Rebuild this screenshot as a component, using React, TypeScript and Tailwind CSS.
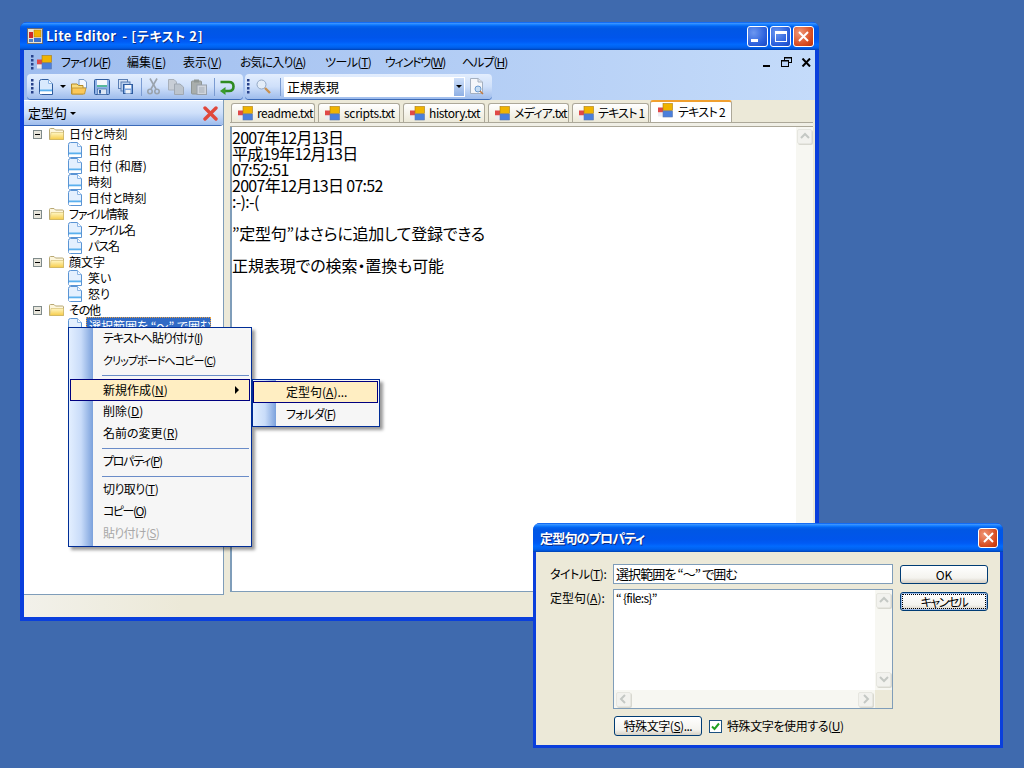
import React from 'react'

const JP = 'font-["Noto_Sans_CJK_JP","Liberation_Sans",sans-serif] [font-feature-settings:"palt"]'

const AppIcon = ({ className = '' }: { className?: string }) => (
  <svg width="15" height="15" viewBox="0 0 15 15" className={`shrink-0 ${className}`}>
    <rect x="0" y="4.5" width="5" height="5" fill="#e04848" />
    <rect x="0" y="9.5" width="5" height="4" fill="#ecebf2" />
    <rect x="5" y="0.5" width="9.5" height="7" fill="#f0b400" stroke="#a87a10" strokeWidth="0.6" />
    <rect x="5" y="8" width="9.5" height="6" fill="#4a7fdc" stroke="#5a78b0" strokeWidth="0.6" />
  </svg>
)

const TitleIcon = () => (
  <svg width="16" height="16" viewBox="0 0 16 16" className="shrink-0">
    <rect x="0.5" y="0.5" width="15" height="15" fill="#ece4d0" stroke="#6a6a70" />
    <rect x="2" y="4" width="4" height="6" fill="#d02828" />
    <rect x="7" y="2" width="7" height="7" fill="#f0b000" stroke="#a87a10" strokeWidth="0.5" />
    <rect x="7" y="10" width="7" height="4" fill="#3a70d0" />
    <rect x="2" y="11" width="4" height="3" fill="#5080c8" />
  </svg>
)

const DocIcon = ({ stroke = '#5a94d4', fill = '#e4f0fe' }: { stroke?: string; fill?: string }) => (
  <svg width="15" height="16" viewBox="0 0 15 16" className="shrink-0">
    <path d="M2.5 0.5H9.5L13.5 4.5V15.5H2.5Q0.5 15.5 0.5 13.5V2.5Q0.5 0.5 2.5 0.5Z" fill={fill} stroke={stroke} />
    <path d="M9.5 0.5V4.5H13.5" fill="#f6faff" stroke="#8ab4e4" />
    <rect x="1" y="10.5" width="12" height="2" fill="#5ab0ee" />
    <rect x="1" y="12.5" width="12" height="2.5" fill="#ffffff" />
  </svg>
)

const FolderIcon = () => (
  <svg width="15" height="14" viewBox="0 0 15 14">
    <defs>
      <linearGradient id="folderFront" x1="0" y1="0" x2="0" y2="1">
        <stop offset="0" stopColor="#fff6c4" />
        <stop offset="1" stopColor="#f6cc48" />
      </linearGradient>
    </defs>
    <path d="M0.5 2.5Q0.5 1.5 1.5 1.5H5L6.5 3H13.5Q14.5 3 14.5 4V12.5H0.5Z" fill="#fdf6dc" stroke="#b8a874" />
    <path d="M2 5.5H14.5V12.5H1Z" fill="url(#folderFront)" stroke="#d0b868" strokeWidth="0.6" />
  </svg>
)

const Minus = () => (
  <span className="flex h-[9px] w-[9px] shrink-0 items-center justify-center border border-[#7f8a8a] bg-[#e8e6dc]">
    <span className="h-[1px] w-[5px] bg-black" />
  </span>
)

const Grip = () => (
  <svg width="3" height="17" viewBox="0 0 3 17" className="shrink-0">
    {[1, 5, 9, 13].map((y) => (
      <rect key={y} x="0" y={y} width="2.5" height="2.5" fill="#27418a" />
    ))}
  </svg>
)

const ToolSep = () => <span className="mx-[3px] block h-[18px] w-[1px] shrink-0 bg-[#7a9bd2]" />

const OpenIcon = () => (
  <svg width="17" height="16" viewBox="0 0 17 16">
    <path d="M8 0.5H13L15.5 3V9H8Z" fill="#f4f8ff" stroke="#7a9cc8" />
    <path d="M0.5 5H6L7.5 6.5H12V15H0.5Z" fill="#f8dc80" stroke="#b48a28" />
    <path d="M1 9H15L13.5 15H1Z" fill="#fcc858" stroke="#c49a38" />
  </svg>
)

const SaveIcon = () => (
  <svg width="16" height="16" viewBox="0 0 16 16">
    <rect x="0.5" y="0.5" width="15" height="15" rx="1" fill="#8fb2e6" stroke="#2f5c9e" />
    <rect x="3" y="1" width="10" height="5" fill="#f6f8fc" />
    <rect x="3" y="6" width="10" height="2" fill="#58b89c" />
    <rect x="3.5" y="10" width="9" height="5.5" fill="#dbe6f4" stroke="#2f5c9e" strokeWidth="0.6" />
    <rect x="5" y="11" width="2" height="3.5" fill="#2f5c9e" />
  </svg>
)

const SaveAllIcon = () => (
  <svg width="15" height="15" viewBox="0 0 15 15">
    <rect x="0.5" y="0.5" width="9" height="9" fill="#d6e3f5" stroke="#5a7eb4" />
    <rect x="3" y="3" width="9" height="9" fill="#bcd1ee" stroke="#5a7eb4" />
    <rect x="5.5" y="5.5" width="9" height="9" fill="#7ea6de" stroke="#2f5c9e" />
    <rect x="7" y="6" width="6" height="3.5" fill="#f6f8fc" />
    <rect x="7.5" y="11" width="5" height="3.5" fill="#eef2f8" />
  </svg>
)

const CutIcon = () => (
  <svg width="13" height="17" viewBox="0 0 13 17" fill="none" stroke="#9aa3ad" strokeWidth="1.6">
    <path d="M10 0.5L4 11" />
    <path d="M3 0.5L9 11" />
    <circle cx="3" cy="13.5" r="2.2" />
    <circle cx="10" cy="13.5" r="2.2" />
  </svg>
)

const CopyIcon = () => (
  <svg width="16" height="16" viewBox="0 0 16 16">
    <path d="M0.5 0.5H6L8.5 3V11H0.5Z" fill="#c8ced6" stroke="#a8b0ba" />
    <path d="M6.5 5H12L15.5 8V15.5H6.5Z" fill="#bcc4cd" stroke="#a0a8b2" />
  </svg>
)

const PasteIcon = () => (
  <svg width="16" height="16" viewBox="0 0 16 16">
    <rect x="0.5" y="2" width="10" height="13" rx="1" fill="#a9aeac" stroke="#8f9694" />
    <rect x="3" y="0.5" width="5" height="3" fill="#8f9694" />
    <rect x="6" y="6" width="9.5" height="9.5" fill="#d0d5dc" stroke="#98a0aa" />
    <path d="M8 9H13.5M8 11H13.5M8 13H13.5" stroke="#9aa2ac" strokeWidth="0.8" />
  </svg>
)

const UndoIcon = () => (
  <svg width="16" height="16" viewBox="0 0 16 16" fill="none">
    <path d="M1.5 3H10Q14.5 3 14.5 7.5Q14.5 12 10 12H6" stroke="#2e8b22" strokeWidth="2.6" />
    <path d="M6.5 8V16L1 12Z" fill="#3a9c2c" />
  </svg>
)

const SearchIcon = () => (
  <svg width="15" height="15" viewBox="0 0 15 15" fill="none">
    <circle cx="5.5" cy="5.5" r="4.5" fill="#e4edf8" stroke="#93a8c4" />
    <path d="M9 9L14 14" stroke="#c89050" strokeWidth="2.4" />
  </svg>
)

const FindDocIcon = () => (
  <svg width="16" height="17" viewBox="0 0 16 17" fill="none">
    <path d="M1.5 0.5H9L13.5 4V15.5H1.5Z" fill="#f4f6fa" stroke="#a4b0c0" />
    <path d="M9 0.5V4H13.5" fill="#dfe5ee" stroke="#a4b0c0" />
    <circle cx="9" cy="11" r="3" fill="#c4dcf4" stroke="#6a9ad0" />
    <path d="M11 13L14 16" stroke="#c07a40" strokeWidth="1.5" />
  </svg>
)

const RedX = () => (
  <svg width="15" height="15" viewBox="0 0 15 15" fill="none">
    <path d="M2 2L13 13M13 2L2 13" stroke="#e0483c" strokeWidth="3.4" strokeLinecap="round" />
  </svg>
)

const CloseBtn = ({ size }: { size: string }) => (
  <span className={`flex items-center justify-center rounded-[3px] border border-white bg-[radial-gradient(circle_at_30%_30%,#f09878,#d84c20_65%,#b83008)] ${size}`}>
    <svg width="11" height="11" viewBox="0 0 11 11" fill="none">
      <path d="M1 1L10 10M10 1L1 10" stroke="white" strokeWidth="2" />
    </svg>
  </span>
)

const BlueBtn = ({ children }: { children: React.ReactNode }) => (
  <span className="flex h-[21px] w-[21px] items-center justify-center rounded-[3px] border border-white bg-[radial-gradient(circle_at_30%_30%,#6c97f0,#2a5fdc_65%,#1c48c0)]">
    {children}
  </span>
)

const Arrow = ({ dir }: { dir: 'up' | 'down' | 'left' | 'right' }) => {
  const d = {
    up: 'M1 6L5 2L9 6',
    down: 'M1 2L5 6L9 2',
    left: 'M6 1L2 5L6 9',
    right: 'M3 1L7 5L3 9',
  }[dir]
  return (
    <svg width="10" height="10" viewBox="0 0 10 10" fill="none">
      <path d={d} stroke="#c4c8c4" strokeWidth="2" />
    </svg>
  )
}

const ScrollBtn = ({ dir, className = '' }: { dir: 'up' | 'down' | 'left' | 'right'; className?: string }) => (
  <span className={`flex shrink-0 items-center justify-center rounded-[2px] border border-[#e6e6e0] bg-[#f2f2ee] shadow-[1px_1px_0_#d8d8d0] ${className}`}>
    <Arrow dir={dir} />
  </span>
)

const menuItems: [string, string, number, string][] = [
  ['ファイル', 'F', 66, 'tracking-[-1px]'],
  ['編集', 'E', 56, 'tracking-[0px]'],
  ['表示', 'V', 57, 'tracking-[0px]'],
  ['お気に入り', 'A', 85, 'tracking-[-0.9px]'],
  ['ツール', 'T', 60, 'tracking-[-0.5px]'],
  ['ウィンドウ', 'W', 77, 'tracking-[-1.2px]'],
  ['ヘルプ', 'H', 60, 'tracking-[-1px]'],
]

const Key = ({ label, k, rest = '' }: { label: string; k: string; rest?: string }) => (
  <>
    {label}(<u>{k}</u>){rest}
  </>
)

const tabs: [string, string, string][] = [
  ['readme.txt', 'w-[84px]', 'tracking-[-0.4px]'],
  ['scripts.txt', 'w-[82px]', 'tracking-[-0.3px]'],
  ['history.txt', 'w-[82px]', 'tracking-[-0.4px]'],
  ['メディア.txt', 'w-[81px]', 'tracking-[-0.8px]'],
  ['テキスト 1', 'w-[77px]', 'tracking-[-0.8px]'],
]

const tree: { name: string; cls?: string; items: [string, string?][] }[] = [
  { name: '日付と時刻', items: [['日付'], ['日付 (和暦)'], ['時刻'], ['日付と時刻']] },
  { name: 'ファイル情報', cls: 'tracking-[-1.2px]', items: [['ファイル名', 'tracking-[-1.4px]'], ['パス名', 'tracking-[-1px]']] },
  { name: '顔文字', items: [['笑い'], ['怒り']] },
  { name: 'その他', cls: 'tracking-[-1.2px]', items: [] },
]

const toolbarBg = 'bg-[linear-gradient(to_bottom,#e3eefe,#cfe0fa_50%,#9ebcec)]'

const MenuItem = ({ label, k, rest, disabled, cls = '' }: { label: string; k: string; rest?: string; disabled?: boolean; cls?: string }) => (
  <div className={`flex h-[22px] items-start pl-[34px] leading-[20px] ${cls} ${disabled ? 'text-[#a8a8a8]' : 'text-black'}`}>
    <span><Key label={label} k={k} rest={rest} /></span>
  </div>
)

const MenuSep = ({ h }: { h: string }) => (
  <div className={`flex items-center pl-[33px] pr-[2px] ${h}`}>
    <span className="h-[1px] w-full bg-[#6a8cc8]" />
  </div>
)

const XpButton = ({ children, focus, className = '' }: { children: React.ReactNode; focus?: boolean; className?: string }) => (
  <div className={`flex items-center justify-center rounded-[3px] border border-[#003c74] bg-[linear-gradient(to_bottom,#ffffff,#f4f3ee_70%,#d6d0c5)] ${className}`}>
    {focus ? (
      <span className="flex h-[15px] w-[84px] items-center justify-center border border-dotted border-black">{children}</span>
    ) : (
      children
    )}
  </div>
)

export default function App() {
  return (
    <div className={`relative h-[768px] w-[1024px] overflow-hidden bg-[#3f6aae] text-[12px] text-black ${JP}`}>
      {/* main window */}
      <div className="absolute left-[20px] top-[22px] flex h-[599px] w-[799px] flex-col overflow-hidden rounded-t-[7px] bg-[#0a3fdc]">
        <div className="flex h-[28px] shrink-0 items-center bg-[linear-gradient(to_bottom,#0058ee_0%,#3a93ff_5%,#127dff_10%,#0262ee_16%,#0057e5_24%,#0055eb_56%,#005bf5_70%,#026afe_80%,#0062ef_90%,#0052d6_96%,#0040ab_100%)] pl-[7px] pr-[5px]">
          <TitleIcon />
          <span className="ml-[3px] flex whitespace-pre text-[13px] font-bold text-white [text-shadow:1px_1px_0_#0a2a80]">
            <span className="tracking-[0.35px]">Lite Editor</span>
            <span className="ml-[6px] tracking-[0.6px]">- [テキスト 2]</span>
          </span>
          <span className="ml-auto flex gap-[2px]">
            <BlueBtn><span className="mt-[8px] mr-[6px] h-[3px] w-[7px] bg-white" /></BlueBtn>
            <BlueBtn><span className="h-[11px] w-[12px] border border-t-[3px] border-white" /></BlueBtn>
            <CloseBtn size="h-[21px] w-[21px]" />
          </span>
        </div>

        <div className="mx-[4px] flex min-h-0 flex-1 flex-col bg-[#ece9d8]">
          <div className="bg-[linear-gradient(to_right,#9ebcee,#c4dbfa)]">
            {/* menu */}
            <div className="flex h-[24px] items-center pl-[7px]">
              <Grip />
              <span className="ml-[3px] w-[24px]"><AppIcon /></span>
              {menuItems.map(([label, k, w, cls]) => (
                <span key={k} className={`shrink-0 ${cls}`} style={{ width: w }}>
                  <Key label={label} k={k} />
                </span>
              ))}
              <span className="ml-auto flex items-center gap-[7px] pr-[3px]">
                <span className="mt-[7px] h-[2px] w-[7px] bg-black" />
                <svg width="12" height="10" viewBox="0 0 12 10" fill="none" stroke="black" className="ml-[4px]">
                  <rect x="3.5" y="0.5" width="7" height="5" />
                  <rect x="0.5" y="3.5" width="7" height="6" fill="#bcd4f8" />
                  <path d="M1 4H7M4 1H10" />
                </svg>
                <svg width="11" height="9" viewBox="0 0 11 9" fill="none" className="ml-[1px]">
                  <path d="M1.5 0.5L9 8.5M9 0.5L1.5 8.5" stroke="black" strokeWidth="2" />
                </svg>
              </span>
            </div>
            {/* toolbars */}
            <div className="flex h-[26px] items-start gap-[2px] pl-[3px]">
              <div className={`flex h-[25px] w-[216px] items-center rounded-[4px] pl-[4px] shadow-[0_1px_0_#3b6ab8] ${toolbarBg}`}>
                <Grip />
                <span className="ml-[5px]"><DocIcon stroke="#2f5c9e" fill="#d8e9fd" /></span>
                <span className="ml-[6px] h-0 w-0 border-x-[3px] border-t-[3px] border-x-transparent border-t-black" />
                <span className="ml-[5px]"><OpenIcon /></span>
                <span className="ml-[6px]"><SaveIcon /></span>
                <span className="ml-[8px]"><SaveAllIcon /></span>
                <span className="ml-[5px]"><ToolSep /></span>
                <span className="ml-[2px]"><CutIcon /></span>
                <span className="ml-[8px]"><CopyIcon /></span>
                <span className="ml-[7px]"><PasteIcon /></span>
                <span className="ml-[4px]"><ToolSep /></span>
                <span className="ml-[1px]"><UndoIcon /></span>
              </div>
              <div className={`flex h-[25px] w-[247px] items-center rounded-[4px] pl-[2px] shadow-[0_1px_0_#3b6ab8] ${toolbarBg}`}>
                <Grip />
                <span className="ml-[6px]"><SearchIcon /></span>
                <span className="ml-[6px]"><ToolSep /></span>
                <div className="flex h-[20px] w-[181px] items-center bg-white pl-[3px] text-[13px]">
                  <span>正規表現</span>
                  <span className="ml-auto flex h-[20px] w-[12px] items-center justify-center border border-white bg-[linear-gradient(to_bottom,#cfe0fa,#8fb0e4)]">
                    <span className="h-0 w-0 border-x-[3px] border-t-[3px] border-x-transparent border-t-black" />
                  </span>
                </div>
                <span className="ml-[4px]"><FindDocIcon /></span>
              </div>
            </div>
          </div>

          <div className="flex min-h-0 flex-1">
            {/* left panel */}
            <div className="flex w-[200px] shrink-0 flex-col border-r border-b border-[#7f9db9] bg-white">
              <div className={`mt-[1px] flex h-[24px] shrink-0 items-center rounded-br-[3px] pl-[4px] pr-[5px] shadow-[0_1px_0_#3b6ab8] ${toolbarBg}`}>
                <span className="text-[13px]">定型句</span>
                <span className="ml-[3px] h-0 w-0 border-x-[3px] border-t-[3px] border-x-transparent border-t-black" />
                <span className="ml-auto"><RedX /></span>
              </div>
              <div className="pt-[1px] leading-[16px]">
                {tree.map((group) => (
                  <div key={group.name}>
                    <div className="flex h-[16px] items-center pl-[9px]">
                      <Minus />
                      <span className="ml-[7px]"><FolderIcon /></span>
                      <span className={`ml-[5px] ${group.cls ?? ''}`}>{group.name}</span>
                    </div>
                    {group.items.map(([item, cls]) => (
                      <div key={item} className="flex h-[16px] items-center pl-[44px]">
                        <DocIcon />
                        <span className={`ml-[5px] ${cls ?? ''}`}>{item}</span>
                      </div>
                    ))}
                  </div>
                ))}
                <div className="flex h-[16px] items-center pl-[44px]">
                  <DocIcon />
                  <span className="ml-[3px] w-[125px] overflow-hidden whitespace-nowrap border border-dotted border-[#e8a040] bg-[#316ac5] pl-[2px] text-white">選択範囲を “～” で囲む</span>
                </div>
              </div>
            </div>

            {/* right side */}
            <div className="flex min-w-0 flex-1 flex-col">
              <div className="flex h-[22px] shrink-0 items-end gap-[3px] pl-[7px]">
                {tabs.map(([name, w, cls]) => (
                  <div key={name} className={`flex h-[19px] shrink-0 items-center rounded-t-[3px] border border-b-0 border-[#aca899] bg-[linear-gradient(to_bottom,#ffffff,#ece9d8)] pl-[6px] ${w}`}>
                    <AppIcon />
                    <span className={`ml-[4px] whitespace-nowrap ${cls}`}>{name}</span>
                  </div>
                ))}
                <div className="-ml-[2px] flex h-[22px] w-[82px] shrink-0 items-center rounded-t-[3px] border-x border-[#aca899] border-t-[2px] border-t-[#f0a030] bg-white pl-[7px]">
                  <AppIcon className="-mt-[3px]" />
                  <span className="ml-[5px] whitespace-nowrap tracking-[-0.7px]">テキスト 2</span>
                </div>
              </div>
              <div className="flex min-h-0 flex-1 flex-col pl-[6px] pr-[2px] pb-[3px]">
                <div className="h-[5px] shrink-0 border-y border-[#aca899] bg-[#f0efe6]" />
                <div className="flex min-h-0 flex-1 border-l-[2px] border-b border-[#7f9db9] bg-white">
                  <div className="flex-1 whitespace-nowrap pt-[2px] text-[16px] leading-[16px]">
                    <div className="whitespace-pre tracking-[-0.7px]">{'2007年12月13日\n平成19年12月13日\n07:52:51\n2007年12月13日 07:52\n:-):-('}</div>
                    <div className="mt-[16px] tracking-[-0.25px]">”定型句”はさらに追加して登録できる</div>
                    <div className="mt-[16px] tracking-[-0.1px]">正規表現での検索・置換も可能</div>
                  </div>
                  <div className="flex w-[17px] shrink-0 flex-col items-center bg-[#f7f7f2] pt-[2px]">
                    <ScrollBtn dir="up" className="h-[15px] w-[15px]" />
                  </div>
                </div>
              </div>
            </div>
          </div>
          {/* status bar */}
          <div className="h-[22px] shrink-0 bg-[linear-gradient(to_right,#f2f1ea,#ece9d8_20%)]" />
        </div>
        <div className="h-[4px] shrink-0" />
      </div>

      {/* context menu */}
      <div className="absolute left-[68px] top-[327px] h-[220px] w-[184px] border border-[#002d96] bg-[linear-gradient(to_right,#e3efff_0,#c9dcf9_12px,#7ba1dc_24px,#f6f6f6_24px)] shadow-[3px_3px_3px_rgba(0,0,0,0.4)]">
        <MenuItem label="テキストへ貼り付け" k="I" cls="tracking-[-1px]" />
        <MenuItem label="クリップボードへコピー" k="C" cls="text-[11px] tracking-[-0.9px]" />
        <MenuSep h="h-[7px]" />
        <div className="mx-[1px] flex h-[22px] items-center border border-[#000080] bg-[#ffeec2] pl-[32px] pr-[10px]">
          <span className="-mt-[1px]"><Key label="新規作成" k="N" /></span>
          <span className="ml-auto h-0 w-0 border-y-[4px] border-l-[4px] border-y-transparent border-l-black" />
        </div>
        <MenuItem label="削除" k="D" />
        <MenuItem label="名前の変更" k="R" />
        <MenuSep h="h-[6px]" />
        <MenuItem label="プロパティ" k="P" cls="tracking-[-1.3px]" />
        <MenuSep h="h-[6px]" />
        <MenuItem label="切り取り" k="T" cls="tracking-[-0.6px]" />
        <MenuItem label="コピー" k="O" cls="tracking-[-1.5px]" />
        <MenuItem label="貼り付け" k="S" cls="tracking-[-0.7px]" disabled />
      </div>

      {/* submenu */}
      <div className="absolute left-[252px] top-[379px] h-[48px] w-[128px] border border-[#002d96] bg-[linear-gradient(to_right,#e3efff_0,#c9dcf9_12px,#7ba1dc_23px,#f6f6f6_23px)] pt-[1px] shadow-[3px_3px_3px_rgba(0,0,0,0.4)]">
        <div className="mr-[1px] flex h-[22px] items-center border border-[#000080] bg-[#ffeec2] pl-[32px]">
          <span className="-mt-[1px]"><Key label="定型句" k="A" rest="..." /></span>
        </div>
        <div className="flex h-[22px] items-center pl-[33px]">
          <span className="-mt-[1px] tracking-[-1px]"><Key label="フォルダ" k="F" /></span>
        </div>
      </div>

      {/* property dialog */}
      <div className="absolute left-[533px] top-[523px] flex h-[225px] w-[470px] flex-col overflow-hidden rounded-t-[7px] bg-[#0a3fdc]">
        <div className="flex h-[29px] shrink-0 items-center bg-[linear-gradient(to_bottom,#0058ee_0%,#3a93ff_5%,#127dff_10%,#0262ee_16%,#0057e5_24%,#0055eb_56%,#005bf5_70%,#026afe_80%,#0062ef_90%,#0052d6_96%,#0040ab_100%)] pl-[7px] pr-[5px]">
          <span className="text-[13px] font-bold tracking-[-0.8px] text-white [text-shadow:1px_1px_0_#0a2a80]">定型句のプロパティ</span>
          <span className="ml-auto"><CloseBtn size="h-[20px] w-[20px]" /></span>
        </div>
        <div className="mx-[3px] mb-[3px] flex min-h-0 flex-1 bg-[#ece9d8] pl-[14px] pt-[12px]">
          <div className="flex w-[343px] shrink-0 flex-col">
            <div className="flex">
              <span className="w-[63px] shrink-0 leading-[19px] tracking-[-0.5px]"><Key label="タイトル" k="T" rest=":" /></span>
              <div className="flex h-[20px] w-[280px] items-center border border-[#7f9db9] bg-white pl-[2px] text-[13px] tracking-[-0.9px]">選択範囲を “～” で囲む</div>
            </div>
            <div className="mt-[5px] flex">
              <span className="w-[63px] shrink-0 leading-[17px]"><Key label="定型句" k="A" rest=":" /></span>
              <div className="flex h-[120px] w-[280px] flex-col border border-[#7f9db9] bg-white">
                <div className="flex min-h-0 flex-1">
                  <div className="flex-1 pl-[2px] leading-[16px] tracking-[-0.7px]">“ {'{file:s}'}”</div>
                  <div className="flex w-[17px] shrink-0 flex-col items-center justify-between bg-[#f7f7f2] py-[3px]">
                    <ScrollBtn dir="up" className="h-[15px] w-[15px]" />
                    <ScrollBtn dir="down" className="h-[15px] w-[15px]" />
                  </div>
                </div>
                <div className="flex h-[18px] shrink-0">
                  <div className="flex flex-1 items-center justify-between bg-[#f7f7f2] px-[2px]">
                    <ScrollBtn dir="left" className="h-[15px] w-[15px]" />
                    <ScrollBtn dir="right" className="h-[15px] w-[15px]" />
                  </div>
                  <div className="w-[17px] bg-[#ece9d8]" />
                </div>
              </div>
            </div>
            <div className="mt-[7px] flex items-center pl-[64px]">
              <XpButton className="h-[20px] w-[88px] tracking-[-0.5px]"><Key label="特殊文字" k="S" rest="..." /></XpButton>
              <span className="ml-[7px] flex h-[13px] w-[13px] items-center justify-center border border-[#1c5180] bg-white">
                <svg width="9" height="9" viewBox="0 0 9 9" fill="none">
                  <path d="M1 4.5L3.5 7L8 1.5" stroke="#21a121" strokeWidth="2" />
                </svg>
              </span>
              <span className="ml-[5px] tracking-[-0.4px]"><Key label="特殊文字を使用する" k="U" /></span>
            </div>
          </div>
          <div className="ml-[7px] mt-[1px] flex flex-col gap-[8px]">
            <XpButton className="h-[19px] w-[88px]">OK</XpButton>
            <XpButton focus className="h-[19px] w-[88px] tracking-[-1.5px] shadow-[inset_0_0_0_1px_#9dbbe8]">キャンセル</XpButton>
          </div>
        </div>
      </div>
    </div>
  )
}
